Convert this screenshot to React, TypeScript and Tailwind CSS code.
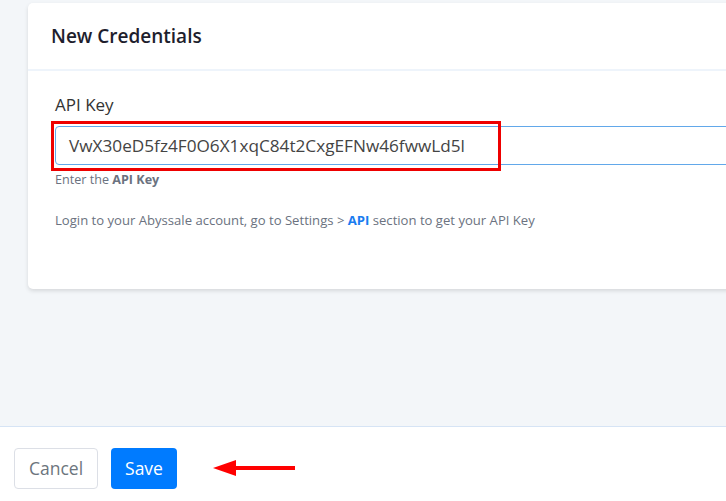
import React from "react";

export default function App() {
  return (
    <div
      className="w-[726px] h-[501px] overflow-hidden bg-[#f3f6f9] flex flex-col"
      style={{ fontFamily: '"Open Sans", "Liberation Sans", sans-serif' }}
    >
      <div className="flex-1 pt-[3px] pl-[28px] overflow-hidden">
        <div className="w-[760px] bg-white rounded-l-[5px] shadow-[0_2px_4px_rgba(0,0,0,0.12)] h-[286px] flex flex-col">
          <div className="h-[68px] border-b-2 border-[#eef4fb] flex items-center pl-[23px]">
            <h2 className="text-[19px] font-semibold text-[#1e1e2d] leading-none pt-[1px]">New Credentials</h2>
          </div>
          <div className="pl-[27px] pt-[24px]">
            <label className="block text-[17px] text-[#333] leading-[20px]">API Key</label>
            <div className="relative mt-[11px]">
              <div className="h-[39px] border border-[#62a8ea] rounded-l-[4px] flex items-center pl-[13px] text-[17.2px] text-[#444]">
                VwX30eD5fz4F0O6X1xqC84t2CxgEFNw46fwwLd5l
              </div>
              <div className="absolute left-[-4px] top-[-5px] w-[450px] h-[50px] border-[3px] border-[#ee0000]" />
            </div>
            <p className="mt-[7px] text-[12.6px] text-[#6b7280] leading-[16px]">
              Enter the <span className="font-bold">API Key</span>
            </p>
            <p className="mt-[24px] text-[13.1px] text-[#6b7280] leading-[16px]">
              Login to your Abyssale account, go to Settings &gt;{" "}
              <span className="font-bold text-[#1a7cf0]">API</span> section to get your API Key
            </p>
          </div>
        </div>
      </div>
      <div className="h-[75px] bg-white border-t border-[#d6e4f5] flex items-start pt-[21px] pl-[14px] gap-[13px]">
        <button className="h-[41px] w-[84px] border border-[#dcdfe6] rounded-[4px] text-[17.5px] text-[#6c757d] bg-white">
          Cancel
        </button>
        <button className="h-[41px] w-[66px] rounded-[4px] text-[17.5px] text-white bg-[#007bff]">
          Save
        </button>
        <svg width="84" height="18" viewBox="0 0 84 18" className="ml-[23px] mt-[11px]">
          <polygon points="0,9 23,1 23,17" fill="#f00" />
          <rect x="22" y="7" width="60" height="4" fill="#f00" />
        </svg>
      </div>
    </div>
  );
}
